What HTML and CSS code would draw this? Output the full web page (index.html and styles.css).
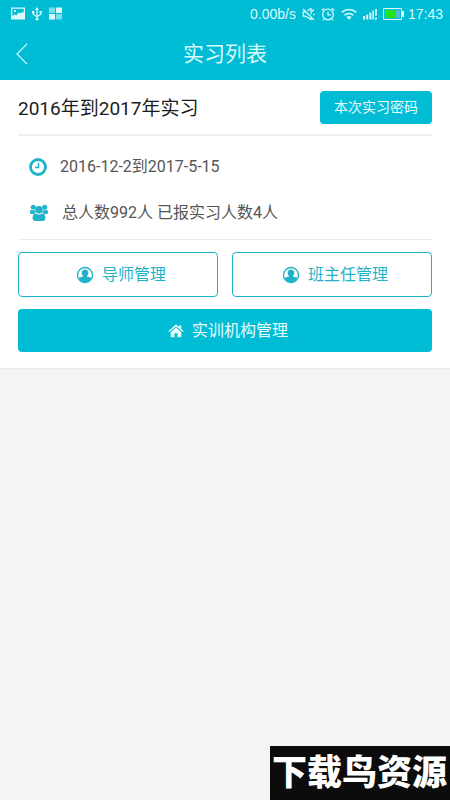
FILE: index.html
```html
<!DOCTYPE html>
<html lang="zh-CN">
<head>
<meta charset="utf-8">
<meta name="viewport" content="width=device-width, initial-scale=1">
<title>实习列表</title>
<link rel="stylesheet" href="styles.css">
</head>
<body>
<svg class="defs" aria-hidden="true">
  <symbol id="user" viewBox="0 0 18 18">
    <circle cx="9" cy="9" r="7.500" fill="none" stroke="currentColor" stroke-width="1.300"/>
    <path fill="currentColor" d="M9 3.400c2 0 3.300 1.500 3.300 3.400 0 1.400-.5 2.500-1.300 3.200 0 .6.500.8 1.700 1 1.200.2 2.300.6 2.900 1.400A7.600 7.600 0 0 1 9 16.700a7.600 7.600 0 0 1-6.600-4.300c.6-.8 1.700-1.200 2.900-1.400 1.200-.2 1.700-.4 1.700-1-.8-.7-1.300-1.800-1.300-3.200 0-1.900 1.300-3.400 3.300-3.400z"/>
  </symbol>
</svg>
<header class="top">
  <div class="status">
    <div class="status-group status-left">
      <svg width="14" height="13" viewBox="0 0 14 13"><path fill="currentColor" fill-rule="evenodd" d="M0 .5h14v12H0zM1.300 1.800v7.400l2.200-2 1.600 1.400 3-3.400 1.400 1.300 1.800-1.800 1.400 1.300V1.800zM3 3h2v2H3z"/></svg>
      <svg width="10" height="14" viewBox="0 0 10 14" fill="none" stroke="currentColor" stroke-width="1.200"><path d="M5 2v10M1.200 5v2.300L5 9.800l3.800-2.500V5"/><path fill="currentColor" stroke="none" d="M5 0l2 3H3zM0 4h2.400v2.400H0zM7.600 4H10v2.400H7.600z"/><circle cx="5" cy="12" r="1.600" fill="currentColor" stroke="none"/></svg>
      <svg width="13" height="13" viewBox="0 0 13 13" fill="currentColor"><path opacity=".55" d="M0 .5h6v5.500H0zM7 7h6v5.500H7z"/><path d="M7 .5h6v5.500H7zM0 7h6v5.500H0z"/></svg>
    </div>
    <div class="status-group">
      <span>0.00b/s</span>
      <svg width="13" height="14" viewBox="0 0 13 14" fill="none" stroke="currentColor" stroke-width="1.200"><path d="M1 2l11 11M3.500 4.800H1.200v4.400h2.300L9 12.500V10M5.500 3.800L9 1.500v5.700M11.800 2.500L10 4.500M11 7.500h1.800"/></svg>
      <svg width="14" height="14" viewBox="0 0 14 14" fill="none" stroke="currentColor" stroke-width="1.200"><circle cx="7" cy="7.500" r="5.300"/><path d="M7 4.500v3.300h2.800M.7 3.500l2.600-2.400M13.300 3.500l-2.600-2.400M3 12l-1.200 1.500M11 12l1.200 1.500"/></svg>
      <svg width="16" height="12" viewBox="0 0 16 12" fill="none" stroke="currentColor" stroke-width="1.500"><path d="M.8 4.400a10.500 10.500 0 0 1 14.400 0M3.500 7.300a6.600 6.600 0 0 1 9 0"/><path fill="currentColor" stroke="none" d="M5.500 9.300a3.600 3.600 0 0 1 5 0L8 11.800z"/></svg>
      <svg width="14" height="12" viewBox="0 0 14 12" fill="currentColor"><path d="M0 8h2v3.500H0zM3.200 6.500h2v5h-2zM6.400 4.500h2v7h-2zM9.400 2.500h1.600v9H9.400zM12 1h2l-.3 7h-1.400zM12 9.500h2v2h-2z"/></svg>
      <div class="power">
        <svg width="21" height="12" viewBox="0 0 21 12"><path fill="none" stroke="currentColor" d="M.5.5h18v11H.5z"/><path fill="currentColor" d="M19 3h2v6h-2z"/><path fill="#1fe51f" d="M2 2h11v8H2z"/><path fill="#54b9d6" d="M13 2h4v8h-4z"/></svg>
        <span>17:43</span>
      </div>
    </div>
  </div>
  <div class="nav">
    <button class="back" type="button" aria-label="返回">
      <svg width="12" height="22" viewBox="0 0 12 22" fill="none" stroke="currentColor" stroke-width="1.200"><path d="M11 .8L1 11l10 10.200"/></svg>
    </button>
    <h1>实习列表</h1>
  </div>
</header>
<main class="card">
  <div class="card-head">
    <h2>2016年到2017年实习</h2>
    <button class="btn btn-small" type="button">本次实习密码</button>
  </div>
  <ul class="facts">
    <li>
      <svg width="18" height="18" viewBox="0 0 18 18" fill="none" stroke="currentColor"><circle cx="9" cy="9" r="7.500" stroke-width="2.800"/><path stroke-width="1.500" d="M9.500 4.800v4.700H6"/></svg>
      <span>2016-12-2到2017-5-15</span>
    </li>
    <li>
      <svg width="20" height="18" viewBox="0 0 20 18" fill="currentColor"><circle cx="4.300" cy="3.300" r="2.500"/><circle cx="15.700" cy="3.300" r="2.500"/><circle cx="10" cy="5.700" r="3.800"/><path d="M2.400 5.700c1 .8 2.500.8 3.400.3 0 1.200.3 2.200 1 3-1.200 0-2 .4-2.600 1.100H3C1.800 10.100 1 9.500 1 8.400c0-1.300.4-2.700 1.400-2.700zM17.600 5.700c-1 .8-2.500.8-3.400.3 0 1.200-.3 2.200-1 3 1.200 0 2 .4 2.600 1.100H17c1.200 0 2-.6 2-1.700 0-1.300-.4-2.700-1.400-2.700z"/><path d="M6.300 9.300c2.200 1.600 5.200 1.600 7.400 0 1.900.2 2.700 2.500 2.700 5 0 1.700-1 2.700-2.700 2.700H6.300c-1.700 0-2.700-1-2.700-2.700 0-2.500.8-4.800 2.700-5z"/></svg>
      <span>总人数992人 已报实习人数4人</span>
    </li>
  </ul>
  <div class="actions">
    <button class="btn btn-action btn-outline" type="button"><svg width="18" height="18"><use href="#user"/></svg>导师管理</button>
    <button class="btn btn-action btn-outline" type="button"><svg width="18" height="18"><use href="#user"/></svg>班主任管理</button>
    <button class="btn btn-action btn-wide" type="button"><svg width="16" height="14" viewBox="0 0 16 14" fill="currentColor"><path d="M8 3.600l5.300 4.600v4.400c0 .4-.2.600-.6.600H9.500V9.300h-3v3.900H3.300c-.4 0-.6-.2-.6-.6V8.200z"/><path d="M7.200 1.100c.5-.4 1.100-.4 1.600 0l2.300 2V1.500h2.100v3.400L15.600 7l-.9 1L8 2.400 1.300 8l-.9-1z"/></svg>实训机构管理</button>
  </div>
</main>
<aside class="mark">下载鸟资源</aside>
</body>
</html>
```

FILE: styles.css
```css
* {
  box-sizing: border-box;
}

body {
  margin: 0;
  min-height: 100vh;
  background: #f4f4f4;
  color: #555;
  font-family: Roboto, "Noto Sans CJK SC", sans-serif;
  font-size: 16px;
  line-height: 24px;
}

button {
  font: inherit;
  cursor: pointer;
}

svg {
  flex: none;
}

.defs {
  position: absolute;
  width: 0;
  height: 0;
}

.top {
  background: #00bcd5;
  color: #d9fbff;
}

.status {
  display: flex;
  justify-content: space-between;
  align-items: center;
  height: 27px;
  padding: 0 7px 0 11px;
  font-family: "Liberation Sans", sans-serif;
  font-size: 14px;
}

.status-group {
  display: flex;
  align-items: center;
  gap: 6px;
}

.status-left {
  gap: 7px;
}

.power {
  display: flex;
  align-items: center;
  gap: 4px;
}

.nav {
  display: grid;
  grid-template-columns: 44px 1fr 44px;
  align-items: center;
  height: 53px;
}

.back {
  display: flex;
  padding: 12px 16px;
  border: 0;
  background: none;
  color: inherit;
}

h1,
h2 {
  margin: 0;
  font-weight: 400;
}

h1 {
  font-size: 21px;
  text-align: center;
}

.card {
  padding: 0 18px 16px;
  border-bottom: 1px solid #ececec;
  background: #fff;
}

.card-head {
  display: flex;
  justify-content: space-between;
  align-items: center;
  height: 56px;
  border-bottom: 2px solid #f0f0f0;
}

h2 {
  padding-top: 3px;
  color: #1c1c1c;
  font-size: 19px;
}

.btn {
  display: flex;
  justify-content: center;
  align-items: center;
  gap: 8px;
  height: 43px;
  padding: 0;
  border: 0;
  border-radius: 4px;
  background: #00bcd5;
  color: #e8fdff;
}

.btn-small {
  height: 33px;
  padding: 0 14px;
  font-size: 14px;
}

.facts {
  display: grid;
  gap: 22px;
  margin: 0;
  padding: 19px 11px 14px;
  border-bottom: 1px solid #ececec;
  list-style: none;
}

.facts li {
  display: flex;
  align-items: center;
  gap: 13px;
}

.facts svg {
  color: #1fb3c8;
}

.actions {
  display: grid;
  grid-template-columns: 1fr 1fr;
  gap: 12px 14px;
  padding-top: 12px;
}

.btn-action {
  padding-left: 6px;
}

.btn-outline {
  height: 45px;
  border: 1px solid #1fb3c8;
  background: #fff;
  color: #1fb3c8;
}

.btn-wide {
  grid-column: 1 / -1;
}

.mark {
  position: fixed;
  right: 0;
  bottom: 0;
  padding: 2px 3px 0 2px;
  background: #0c0c0c;
  color: #fff;
  font-size: 35px;
  font-weight: 900;
  line-height: 52px;
}
```
